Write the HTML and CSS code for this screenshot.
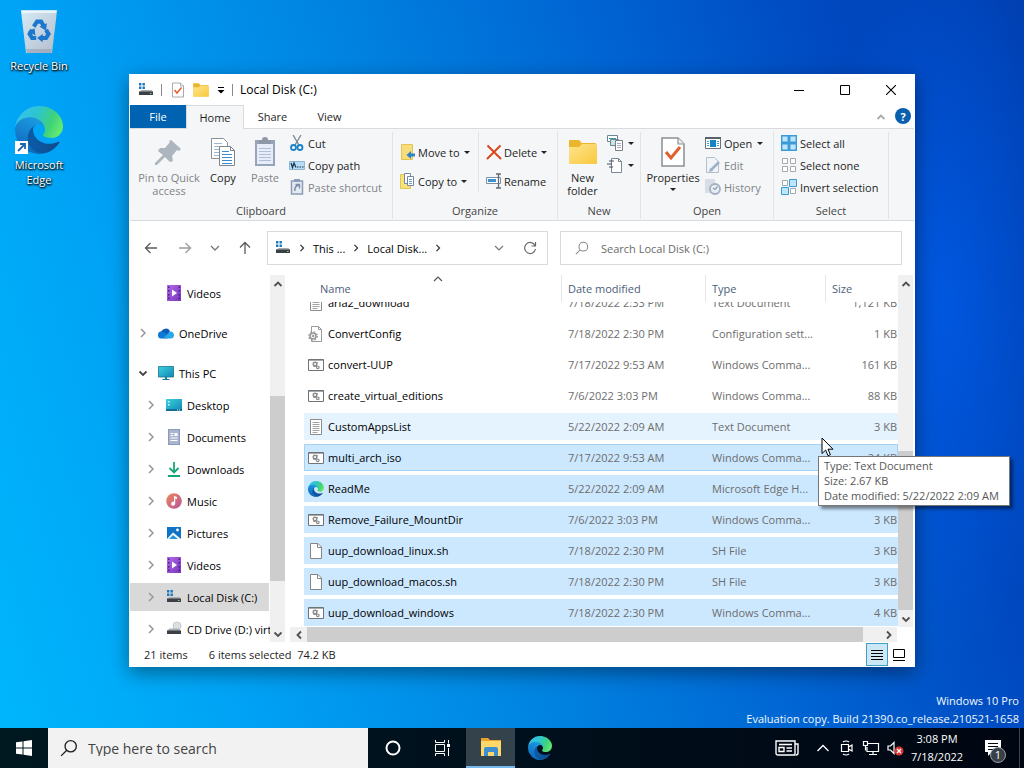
FILE: index.html
```html
<!DOCTYPE html>
<html lang="en">
<head>
  <meta charset="UTF-8" />
  <meta name="viewport" content="width=device-width, initial-scale=1.0"/>
  <title>Local Disk (C:)</title>
  <link rel="stylesheet" href="styles.css">
</head>
<body>

  <!-- shared icons -->
  <svg class="sprite" width="0" height="0" aria-hidden="true">
    <defs>
      <linearGradient id="edgeBottom" x1="0.25" y1="0.6" x2="1" y2="0.6">
        <stop offset="0" stop-color="#0c59a4"/><stop offset="1" stop-color="#114a8b"/>
      </linearGradient>
      <linearGradient id="edgeLeft" x1="0.6" y1="0" x2="0.2" y2="1">
        <stop offset="0" stop-color="#1b9de2"/><stop offset="0.5" stop-color="#1680cf"/><stop offset="1" stop-color="#0663b5"/>
      </linearGradient>
      <linearGradient id="edgeTop" x1="0" y1="0.3" x2="1" y2="0.6">
        <stop offset="0" stop-color="#35c1f1"/><stop offset="0.4" stop-color="#2dc5cf"/><stop offset="0.75" stop-color="#3fd17c"/><stop offset="1" stop-color="#66eb6e"/>
      </linearGradient>
      <linearGradient id="folderFill" x1="0" y1="0" x2="1" y2="1">
        <stop offset="0" stop-color="#ffe48f"/><stop offset="1" stop-color="#f8c93c"/>
      </linearGradient>
      <linearGradient id="binFill" x1="0" y1="0" x2="1" y2="1">
        <stop offset="0" stop-color="#d6ebf6"/><stop offset="1" stop-color="#b2bccc"/>
      </linearGradient>
      <linearGradient id="screenFill" x1="0" y1="0" x2="1" y2="1">
        <stop offset="0" stop-color="#3ad3de"/><stop offset="1" stop-color="#1285b5"/>
      </linearGradient>
      <linearGradient id="musicFill" x1="0" y1="0" x2="1" y2="1">
        <stop offset="0" stop-color="#ee8a55"/><stop offset="1" stop-color="#b7539b"/>
      </linearGradient>
      <linearGradient id="videoFill" x1="0" y1="0" x2="1" y2="1">
        <stop offset="0" stop-color="#b06ae6"/><stop offset="1" stop-color="#7a36bd"/>
      </linearGradient>
    </defs>

    <symbol id="edge" viewBox="0 0 256 256">
      <g transform="translate(-4.63 -4.92)">
        <path fill="url(#edgeBottom)" d="M235.68 195.46a93.73 93.73 0 0 1-10.54 4.71 101.87 101.87 0 0 1-35.9 6.46c-47.32 0-88.54-32.55-88.54-74.32A31.48 31.48 0 0 1 117.13 105c-42.8 1.8-53.8 46.4-53.8 72.53 0 73.88 68.09 81.37 82.76 81.37 7.91 0 19.84-2.3 27-4.56l1.31-.44a128.34 128.34 0 0 0 66.6-52.8 4 4 0 0 0-5.32-5.64Z"/>
        <path fill="url(#edgeLeft)" d="M110.34 246.34A79.2 79.2 0 0 1 87.6 225a80.72 80.72 0 0 1 29.53-120c3.12-1.47 8.45-4.13 15.54-4a32.35 32.35 0 0 1 25.69 13 31.88 31.88 0 0 1 6.36 18.66c0-.21 24.46-79.6-80-79.6-43.9 0-80 41.66-80 78.21a130.15 130.15 0 0 0 12.11 56 128 128 0 0 0 156.38 67.11 75.55 75.55 0 0 1-62.78-8Z"/>
        <path fill="url(#edgeTop)" d="M156.94 153.78c-.81 1.05-3.3 2.5-3.3 5.66 0 2.61 1.7 5.12 4.72 7.23 14.38 10 41.49 8.68 41.56 8.68a59.56 59.56 0 0 0 30.27-8.35 61.38 61.38 0 0 0 30.43-52.88c.26-22.41-8-37.31-11.34-43.91-21.19-41.45-66.92-65.28-116.67-65.28A128 128 0 0 0 4.63 131.18c.48-36.54 36.8-66.05 80-66.05 3.5 0 23.46.34 42 10.07 16.34 8.58 24.9 18.94 30.85 29.21 6.18 10.67 7.28 24.15 7.28 29.52s-2.74 13.33-7.82 19.85Z"/>
      </g>
    </symbol>

    <symbol id="drive" viewBox="0 0 16 16">
      <path fill="#1a79bd" d="M1 1h2.400v2.400H1zM4.500 1h2.400v2.400H4.500zM1 4.500h2.400v2.400H1zM4.500 4.500h2.400v2.400H4.500z"/>
      <path fill="#a9adb2" d="M3.500 8h10L15 10H1z"/>
      <path fill="#3b4046" d="M1 9.500h14V13H1z"/>
      <path fill="#7fd38a" d="M12 11h1.500v1H12z"/>
    </symbol>
    <symbol id="cd-drive" viewBox="0 0 16 16">
      <circle cx="11" cy="5" r="4" fill="#dfe3e5" stroke="#b9bec2" stroke-width="0.800"/>
      <circle cx="11" cy="5" r="1.200" fill="#fff" stroke="#b9bec2" stroke-width="0.600"/>
      <path fill="#a9adb2" d="M3.500 7.500h9.500L15 10H1z"/>
      <path fill="#3b4046" d="M1 9.500h14V13H1z"/>
    </symbol>
    <symbol id="doc-check" viewBox="0 0 26 32">
      <path fill="#fff" stroke="#8a8f94" stroke-width="1.500" d="M2 2h16l6 6v22H2z"/>
      <path fill="#eceff1" stroke="#8a8f94" stroke-width="1.200" d="M18 2v6h6"/>
      <path fill="none" stroke="#e0602c" stroke-width="3" d="M6 16l5 6 9-11"/>
    </symbol>
    <symbol id="folder" viewBox="0 0 32 28">
      <path fill="#eab62d" d="M2 3q0-1 1-1h9l3 3h13q1 0 1 1v19H2z"/>
      <path fill="url(#folderFill)" d="M2 9h10l3-3h14q1 0 1 1v18q0 1-1 1H3q-1 0-1-1z"/>
    </symbol>
    <symbol id="chevron" viewBox="0 0 10 10">
      <path fill="none" stroke="currentColor" stroke-width="1.500" d="M3 1l4 4-4 4"/>
    </symbol>
    <symbol id="up" viewBox="0 0 10 10">
      <path fill="none" stroke="currentColor" stroke-width="1.800" d="M1.500 7L5 3.500 8.500 7"/>
    </symbol>
    <symbol id="down" viewBox="0 0 10 10">
      <path fill="none" stroke="currentColor" stroke-width="1.800" d="M1.500 3.500L5 7l3.500-3.500"/>
    </symbol>
    <symbol id="search" viewBox="0 0 16 16">
      <circle cx="9.500" cy="6.500" r="5" fill="none" stroke="currentColor" stroke-width="1.200"/>
      <path stroke="currentColor" stroke-width="1.200" d="M6 10l-5 5"/>
    </symbol>

    <symbol id="videos" viewBox="0 0 16 16">
      <path fill="url(#videoFill)" d="M1 0h14v16H1z"/>
      <path fill="#4a1c80" d="M2 1.500h1.500V3H2zM2 5h1.500v1.500H2zM2 9h1.500v1.500H2zM2 12.500h1.500V14H2zM12.500 1.500H14V3h-1.500zM12.500 5H14v1.500h-1.500zM12.500 9H14v1.500h-1.500zM12.500 12.500H14V14h-1.500z"/>
      <path fill="#fff" d="M6 4.500l5 3.500-5 3.500z"/>
    </symbol>
    <symbol id="onedrive" viewBox="0 0 16 16">
      <path fill="#0a5cb5" d="M3 7a5 5 0 0 1 9-1l-3 5H2z"/>
      <path fill="#0f78d4" d="M0 10.500A3.500 3.500 0 0 1 5.500 7L12 11l-3 2.500H3.500A3.200 3.200 0 0 1 0 10.500z"/>
      <path fill="#28a8ea" d="M5 13.500l7-7a3.500 3.500 0 0 1 4 3.700 3.300 3.300 0 0 1-3 3.300z"/>
    </symbol>
    <symbol id="pc" viewBox="0 0 16 16">
      <path fill="url(#screenFill)" stroke="#1a7390" stroke-width="0.800" d="M.500 1.500h15v10.500H.500z"/>
      <path fill="#17799d" d="M7 12h2v2H7zM4.500 14h7v1h-7z"/>
    </symbol>
    <symbol id="desktop" viewBox="0 0 16 16">
      <path fill="url(#screenFill)" d="M0 2h16v12H0z"/>
      <path fill="#0e6f97" d="M0 12h16v2H0z"/>
      <path fill="#e6fbff" d="M2 4h1.500v1.500H2zM2 7h1.500v1.500H2zM11 12.500h1v1h-1zM13 12.500h1v1h-1z"/>
    </symbol>
    <symbol id="documents" viewBox="0 0 16 16">
      <path fill="#8b9ab8" d="M2 0h12v16H2z"/>
      <path fill="#a9b5ce" d="M3 1h10v14H3z"/>
      <path stroke="#fff" d="M4.500 4.500h3M4.500 6.500h3M4.500 9h7M4.500 11.500h7"/>
      <path fill="#fff" d="M8.500 4h3v3h-3z"/>
    </symbol>
    <symbol id="downloads" viewBox="0 0 16 16">
      <path fill="none" stroke="#17a678" stroke-width="1.800" d="M8 1v10M3.500 7L8 11.500 12.500 7M2 15h12"/>
    </symbol>
    <symbol id="music" viewBox="0 0 16 16">
      <circle cx="8" cy="8" r="7.800" fill="url(#musicFill)"/>
      <path fill="#fff" d="M8 3l3 1v2L9.200 5.400V10.500A2 2 0 1 1 8 8.800z"/>
    </symbol>
    <symbol id="pictures" viewBox="0 0 16 16">
      <path fill="#1173c7" d="M1 2h14v12H1z"/>
      <path fill="#fff" d="M1 14l6-6.500 8 6.500z"/>
      <path fill="#2a93dc" d="M3 14l4-4 5 4z"/>
      <circle cx="11.500" cy="5" r="1.400" fill="#fff"/>
    </symbol>

    <symbol id="text-file" viewBox="0 0 16 16">
      <path fill="#fff" stroke="#8b8b8b" d="M2.500.500h11v15h-11z"/>
      <path stroke="#a2a2a2" d="M4.500 3.500h7M4.500 5.500h7M4.500 7.500h7M4.500 9.500h7M4.500 11.500h7M4.500 13.500h5"/>
    </symbol>
    <symbol id="blank-file" viewBox="0 0 16 16">
      <path fill="#fff" stroke="#858585" d="M2.500.500h7.500l3.500 3.500v11.500h-11z"/>
      <path fill="none" stroke="#858585" d="M9.500.500v4h4"/>
    </symbol>
    <symbol id="config-file" viewBox="0 0 16 16">
      <path fill="#fff" stroke="#9a9a9a" d="M3.500.500h7l3 3v12h-10z"/>
      <path fill="none" stroke="#9a9a9a" d="M10.500.500v3h3"/>
      <circle cx="5" cy="10" r="3" fill="#eee" stroke="#969696" stroke-width="1.500"/>
      <circle cx="5" cy="10" r="4.300" fill="none" stroke="#969696" stroke-width="1.200" stroke-dasharray="1.700 1.700"/>
      <circle cx="5" cy="10" r="1" fill="#858585"/>
    </symbol>
    <symbol id="cmd-file" viewBox="0 0 16 16">
      <path fill="#fff" stroke="#6f7478" d="M.500 2.500h15v11H.500z"/>
      <path stroke="#6f7478" stroke-width="1.200" d="M.500 3h15"/>
      <circle cx="7" cy="7" r="1.800" fill="none" stroke="#8a8a8a" stroke-width="1.400"/>
      <circle cx="9.800" cy="10.300" r="1.300" fill="none" stroke="#8a8a8a" stroke-width="1.200"/>
      <path stroke="#8a8a8a" d="M9.500 5l-1 2.500M5 9l3 .500"/>
    </symbol>
  </svg>

  <main class="desktop">

    <div class="shortcuts">
      <a class="shortcut" href="#">
        <svg width="48" height="48" viewBox="0 0 48 48">
          <path fill="url(#binFill)" d="M6 4h36l-5 42H11z"/>
          <path fill="#f3f9fc" opacity="0.800" d="M6 3h36l-1 3H7z"/>
          <path fill="#8d98a8" opacity="0.500" d="M11 42h26l-1 4H12z"/>
          <g transform="translate(4 4) scale(0.820)">
            <g fill="none" stroke="#1b78cc" stroke-width="5">
              <path d="M18 19l4-6h5l3 5"/>
              <path d="M33 23l3 5-3 5h-5"/>
              <path d="M21 33h-5l-3-5 3-5"/>
            </g>
            <path fill="#1b78cc" d="M25 19l9-4-1 9zM29 28v10l-7-5zM11 25l8-4 1 9z"/>
          </g>
        </svg>
        <span>Recycle Bin</span>
      </a>
      <a class="shortcut" href="#">
        <svg width="48" height="48" viewBox="0 0 48 48">
          <use href="#edge" width="48" height="48"/>
          <path fill="#fff" d="M0 35h13v13H0z"/>
          <path fill="none" stroke="#1b67b5" stroke-width="1.800" d="M3 45l7-7M5 38h5v5"/>
        </svg>
        <span>Microsoft Edge</span>
      </a>
    </div>

    <section class="window">
      <header class="titlebar">
        <svg width="16" height="16"><use href="#drive"/></svg>
        <i class="sep"></i>
        <button class="quick" aria-label="Properties"><svg width="14" height="16"><use href="#doc-check"/></svg></button>
        <button class="quick" aria-label="New folder"><svg width="18" height="16"><use href="#folder"/></svg></button>
        <button class="quick" aria-label="Customize toolbar"><svg width="8" height="8" viewBox="0 0 8 8"><path d="M1 1h6v1H1zM.500 4h7L4 7.500z"/></svg></button>
        <i class="sep"></i>
        <h1>Local Disk (C:)</h1>
        <div class="caption-buttons">
          <button aria-label="Minimize"><svg width="10" height="10" viewBox="0 0 10 10"><path fill="none" stroke="#000" d="M0 5.500h10"/></svg></button>
          <button aria-label="Maximize"><svg width="10" height="10" viewBox="0 0 10 10"><path fill="none" stroke="#000" d="M.500.500h9v9h-9z"/></svg></button>
          <button aria-label="Close"><svg width="10" height="10" viewBox="0 0 10 10"><path fill="none" stroke="#000" stroke-width="1.100" d="M0 0l10 10M10 0L0 10"/></svg></button>
        </div>
      </header>

      <nav class="tabs">
        <button class="tab file">File</button>
        <button class="tab active">Home</button>
        <button class="tab">Share</button>
        <button class="tab">View</button>
        <button class="collapse" aria-label="Collapse ribbon"><svg width="10" height="10"><use href="#up"/></svg></button>
        <button class="help" aria-label="Help">?</button>
      </nav>

      <div class="ribbon">
        <section class="group clipboard">
          <div class="group-body">
            <button class="big wide disabled">
              <svg width="32" height="32" viewBox="0 0 32 32"><path fill="#adb5bf" d="M18 4l10 9-2 2-2-1-5 6 1 5-3 1-5-5-8 8-2 0 0-2 8-8-5-4 2-3 5 0 5-6-1-1z"/></svg>
              <span>Pin to Quick access</span>
            </button>
            <button class="big">
              <svg width="32" height="32" viewBox="0 0 32 32">
                <path fill="#fff" stroke="#8b9198" d="M4.500 2.500h12l4 4v16h-16z"/>
                <path stroke="#9fb9d4" d="M7 7.500h8M7 10.500h8M7 13.500h6M7 16.500h6M7 19.500h6"/>
                <path fill="#fff" stroke="#7f858c" d="M12.500 10.500h11l4 4v15h-15z"/>
                <path fill="none" stroke="#7f858c" d="M23.500 10.500v4h4"/>
                <path stroke="#3b8bd0" d="M15 15.500h7M15 18.500h10M15 21.500h10M15 24.500h10M15 27.500h10"/>
              </svg>
              <span>Copy</span>
            </button>
            <button class="big paste disabled">
              <svg width="32" height="32" viewBox="0 0 32 32">
                <path fill="#98a4ba" d="M6 4h20v26H6z"/>
                <path fill="#e6edf8" d="M8 8h16v20H8z"/>
                <path fill="#8d97a8" d="M10 4h3q0-3 3-3t3 3h3v4H10z"/>
                <path stroke="#b1bfd6" d="M10 12.500h12M10 15.500h12M10 18.500h12M10 21.500h12M10 24.500h12"/>
              </svg>
              <span>Paste</span>
            </button>
            <div class="stack">
              <button class="small">
                <svg width="16" height="16" viewBox="0 0 16 16">
                  <path fill="none" stroke="#7b8894" stroke-width="1.300" d="M4 0l6 10M12 0L6 10"/>
                  <circle cx="4.500" cy="12.500" r="2.500" fill="none" stroke="#1b84c6" stroke-width="1.800"/>
                  <circle cx="11" cy="12.500" r="2.500" fill="none" stroke="#1b84c6" stroke-width="1.800"/>
                </svg>Cut
              </button>
              <button class="small">
                <svg width="16" height="16" viewBox="0 0 16 16">
                  <path fill="#b8dcf5" stroke="#8eb5d2" d="M.500 4.500h15v8H.500z"/>
                  <path fill="none" stroke="#17344f" stroke-width="1.200" d="M2 6l1.500 4.500L5 6l2 4.500M8 10h1.500M10.500 10H12M13 10h1.500"/>
                </svg>Copy path
              </button>
              <button class="small disabled">
                <svg width="16" height="16" viewBox="0 0 16 16">
                  <path fill="#e4eaf3" stroke="#8e9cb5" stroke-width="1.500" d="M2.500 2h11v13h-11z"/>
                  <path fill="#8e9cb5" d="M5 0h6v3H5z"/>
                  <path fill="none" stroke="#7d8ca8" stroke-width="1.400" d="M6 12q-1-5 4-6M6.500 5.500h4v4"/>
                </svg>Paste shortcut
              </button>
            </div>
          </div>
          <h2>Clipboard</h2>
        </section>

        <section class="group organize">
          <div class="group-body">
            <div class="stack two">
              <button class="small">
                <svg width="16" height="16" viewBox="0 0 16 16"><path fill="#f7dc7c" stroke="#e8c351" d="M1.500.500h11v15h-11z"/><path fill="#3184c4" d="M15 9.500v3h-4V15L6.500 11 11 7v2.500z"/></svg>
                Move to <i class="caret"></i>
              </button>
              <button class="small">
                <svg width="16" height="16" viewBox="0 0 16 16"><path fill="#f7e27c" stroke="#dcc94f" d="M.500 1.500h10v14H.500z"/><path fill="#fff" stroke="#7386a8" d="M4.500.500h6v10h-6z"/><path fill="#fff" stroke="#7386a8" d="M7.500 3.500h6v9h-6z"/><path stroke="#6fa2d8" d="M9 6.500h3M9 8.500h3M9 10.500h3"/></svg>
                Copy to <i class="caret"></i>
              </button>
            </div>
            <div class="stack two ruled">
              <button class="small">
                <svg width="16" height="16" viewBox="0 0 16 16"><path fill="none" stroke="#d8471f" stroke-width="2" d="M1.500 1.500L15 15M14.500 1.500L1 15"/></svg>
                Delete <i class="caret"></i>
              </button>
              <button class="small">
                <svg width="16" height="16" viewBox="0 0 16 16"><path fill="#fff" stroke="#7b8ea3" d="M.500 4.500h14v6H.500z"/><path fill="#3c91d0" d="M2 6h8v3H2z"/><path fill="none" stroke="#5f6a75" stroke-width="1.300" d="M10 1h5M12.500 1v14M10 15h5"/></svg>
                Rename
              </button>
            </div>
          </div>
          <h2>Organize</h2>
        </section>

        <section class="group new">
          <div class="group-body">
            <button class="big">
              <svg width="32" height="32" viewBox="0 0 32 32"><use href="#folder" y="2" width="32" height="28"/></svg>
              <span>New folder</span>
            </button>
            <div class="stack tight">
              <button class="small" aria-label="New item">
                <svg width="16" height="16" viewBox="0 0 16 16"><path fill="#fff" stroke="#6d8390" d="M.500.500h10v6H.500z"/><path fill="#c8e6e0" stroke="#6d8390" d="M3.500 4.500h8v6h-8z"/><path fill="#fff" stroke="#7a7f88" d="M8.500 5.500h7v10h-7z"/><path stroke="#a6abb8" d="M10 8.500h4M10 10.500h4M10 12.500h4"/><path stroke="#3b9bb0" d="M2 3.500h7"/></svg>
                <i class="caret"></i>
              </button>
              <button class="small" aria-label="Easy access">
                <svg width="16" height="16" viewBox="0 0 16 16"><path fill="#fff" stroke="#7a8794" d="M4.500 1.500h7l3 3v11h-10z"/><path fill="none" stroke="#7a8794" d="M11.500 1.500v3h3"/><path stroke="#42515e" stroke-width="1.200" d="M2 4h5M0 7h5M2 10h4"/></svg>
                <i class="caret"></i>
              </button>
            </div>
          </div>
          <h2>New</h2>
        </section>

        <section class="group open">
          <div class="group-body">
            <button class="big">
              <svg width="26" height="32"><use href="#doc-check"/></svg>
              <span>Properties</span>
              <i class="caret"></i>
            </button>
            <div class="stack">
              <button class="small">
                <svg width="16" height="16" viewBox="0 0 16 16"><path fill="#fff" stroke="#6a7178" d="M.500 2.500h15v11H.500z"/><path fill="#5a6168" d="M0 2h16v2H0z"/><path fill="#1882c5" d="M5 5h6v7H5z"/><path stroke="#3aa0d8" d="M2 6.500h2M2 8.500h2M2 10.500h2M12 6.500h2M12 8.500h2M12 10.500h2"/></svg>
                Open <i class="caret"></i>
              </button>
              <button class="small disabled">
                <svg width="16" height="16" viewBox="0 0 16 16"><path fill="#f1f4f7" stroke="#b5bfc9" d="M1.500.500h8l4 4v11h-12z"/><path stroke="#9db2c6" stroke-width="2.500" d="M14 5l-8 8"/><path fill="#9db2c6" d="M4 15l1-4 3 3z"/></svg>
                Edit
              </button>
              <button class="small disabled">
                <svg width="16" height="16" viewBox="0 0 16 16"><path fill="#d7dee7" d="M0 0h10v14H0z"/><circle cx="10" cy="10" r="5" fill="#e8edf3" stroke="#a2b0c1" stroke-width="1.800"/><path fill="none" stroke="#8b9cb0" stroke-width="1.200" d="M12.500 7.500L10 10.500 8 9"/></svg>
                History
              </button>
            </div>
          </div>
          <h2>Open</h2>
        </section>

        <section class="group select">
          <div class="group-body">
            <div class="stack">
              <button class="small">
                <svg width="16" height="16" viewBox="0 0 16 16"><path fill="#bfe5fa" stroke="#3b9bd6" stroke-width="1.400" d="M.700.700h6.600v6.600H.700zM8.700.700h6.600v6.600H8.700zM.700 8.700h6.600v6.600H.700zM8.700 8.700h6.600v6.600H8.700z"/></svg>
                Select all
              </button>
              <button class="small">
                <svg width="16" height="16" viewBox="0 0 16 16"><path fill="#fff" stroke="#a5a9ad" d="M1.500 1.500h5v5h-5zM9.500 1.500h5v5h-5zM1.500 9.500h5v5h-5zM9.500 9.500h5v5h-5z"/></svg>
                Select none
              </button>
              <button class="small">
                <svg width="16" height="16" viewBox="0 0 16 16"><path fill="#fff" stroke="#a5a9ad" d="M1.500 1.500h5v5h-5zM9.500 9.500h5v5h-5z"/><path fill="#bfe5fa" stroke="#3b9bd6" d="M8.500.500h7v7h-7zM.500 8.500h7v7h-7z"/></svg>
                Invert selection
              </button>
            </div>
          </div>
          <h2>Select</h2>
        </section>
      </div>

      <div class="navbar">
        <div class="history">
          <button aria-label="Back"><svg width="14" height="14" viewBox="0 0 14 14"><path fill="none" stroke="#5c5c5c" stroke-width="1.300" d="M13 7H1.500M6.500 2l-5 5 5 5"/></svg></button>
          <button aria-label="Forward"><svg width="14" height="14" viewBox="0 0 14 14"><path fill="none" stroke="#9a9a9a" stroke-width="1.300" d="M1 7h11.500M7.500 2l5 5-5 5"/></svg></button>
          <button class="narrow" aria-label="Recent locations"><svg width="10" height="10" viewBox="0 0 10 10"><path fill="none" stroke="#777" stroke-width="1.300" d="M1 3l4 4 4-4"/></svg></button>
          <button aria-label="Up"><svg width="14" height="14" viewBox="0 0 14 14"><path fill="none" stroke="#5c5c5c" stroke-width="1.300" d="M7 13V1.500M2 6.500l5-5 5 5"/></svg></button>
        </div>
        <div class="address">
          <svg width="16" height="16"><use href="#drive"/></svg>
          <svg class="crumb-sep" width="8" height="8"><use href="#chevron"/></svg>
          <a href="#">This ...</a>
          <svg class="crumb-sep" width="8" height="8"><use href="#chevron"/></svg>
          <a href="#">Local Disk...</a>
          <svg class="crumb-sep" width="8" height="8"><use href="#chevron"/></svg>
          <button class="drop" aria-label="Previous locations"><svg width="10" height="10" viewBox="0 0 10 10"><path fill="none" stroke="#777" stroke-width="1.200" d="M1 3l4 4 4-4"/></svg></button>
          <button aria-label="Refresh"><svg width="14" height="14" viewBox="0 0 14 14"><path fill="none" stroke="#666" stroke-width="1.200" d="M12 4.500A5.500 5.500 0 1 0 12.500 8M12.500 1v4h-4"/></svg></button>
        </div>
        <label class="search">
          <svg width="14" height="14"><use href="#search"/></svg>
          <input type="text" aria-label="Search" placeholder="Search Local Disk (C:)">
        </label>
      </div>

      <div class="content">
        <aside class="sidebar">
          <ul>
            <li class="child leaf"><a href="#"><svg width="16" height="16"><use href="#videos"/></svg>Videos</a></li>
            <li class="root"><a href="#"><svg class="twist" width="10" height="10"><use href="#chevron"/></svg><svg width="16" height="16"><use href="#onedrive"/></svg>OneDrive</a></li>
            <li class="root"><a href="#"><svg class="twist opened" width="10" height="10"><use href="#down"/></svg><svg width="16" height="16"><use href="#pc"/></svg>This PC</a></li>
            <li class="child"><a href="#"><svg class="twist" width="10" height="10"><use href="#chevron"/></svg><svg width="16" height="16"><use href="#desktop"/></svg>Desktop</a></li>
            <li class="child"><a href="#"><svg class="twist" width="10" height="10"><use href="#chevron"/></svg><svg width="16" height="16"><use href="#documents"/></svg>Documents</a></li>
            <li class="child"><a href="#"><svg class="twist" width="10" height="10"><use href="#chevron"/></svg><svg width="16" height="16"><use href="#downloads"/></svg>Downloads</a></li>
            <li class="child"><a href="#"><svg class="twist" width="10" height="10"><use href="#chevron"/></svg><svg width="16" height="16"><use href="#music"/></svg>Music</a></li>
            <li class="child"><a href="#"><svg class="twist" width="10" height="10"><use href="#chevron"/></svg><svg width="16" height="16"><use href="#pictures"/></svg>Pictures</a></li>
            <li class="child"><a href="#"><svg class="twist" width="10" height="10"><use href="#chevron"/></svg><svg width="16" height="16"><use href="#videos"/></svg>Videos</a></li>
            <li class="child current"><a href="#"><svg class="twist" width="10" height="10"><use href="#chevron"/></svg><svg width="16" height="16"><use href="#drive"/></svg>Local Disk (C:)</a></li>
            <li class="child"><a href="#"><svg class="twist" width="10" height="10"><use href="#chevron"/></svg><svg width="16" height="16"><use href="#cd-drive"/></svg>CD Drive (D:) virtio</a></li>
          </ul>
          <div class="scrollbar tree-scroll">
            <button aria-label="Scroll up"><svg width="10" height="10"><use href="#up"/></svg></button>
            <i class="before"></i><i class="thumb"></i><i class="after"></i>
            <button aria-label="Scroll down"><svg width="10" height="10"><use href="#down"/></svg></button>
          </div>
        </aside>

        <div class="files">
          <div class="files-main">
            <table>
              <thead>
                <tr>
                  <th>Name<svg class="sort" width="10" height="10" viewBox="0 0 10 10"><path fill="none" stroke="#555" stroke-width="1.200" d="M1 6l4-4 4 4"/></svg></th>
                  <th>Date modified</th><th>Type</th><th>Size</th>
                </tr>
              </thead>
              <tbody>
                <tr><td><svg width="16" height="16"><use href="#text-file"/></svg>aria2_download</td><td>7/18/2022 2:33 PM</td><td>Text Document</td><td>1,121 KB</td></tr>
                <tr><td><svg width="16" height="16"><use href="#config-file"/></svg>ConvertConfig</td><td>7/18/2022 2:30 PM</td><td>Configuration sett...</td><td>1 KB</td></tr>
                <tr><td><svg width="16" height="16"><use href="#cmd-file"/></svg>convert-UUP</td><td>7/17/2022 9:53 AM</td><td>Windows Comma...</td><td>161 KB</td></tr>
                <tr><td><svg width="16" height="16"><use href="#cmd-file"/></svg>create_virtual_editions</td><td>7/6/2022 3:03 PM</td><td>Windows Comma...</td><td>88 KB</td></tr>
                <tr class="hover"><td><svg width="16" height="16"><use href="#text-file"/></svg>CustomAppsList</td><td>5/22/2022 2:09 AM</td><td>Text Document</td><td>3 KB</td></tr>
                <tr class="selected focused"><td><svg width="16" height="16"><use href="#cmd-file"/></svg>multi_arch_iso</td><td>7/17/2022 9:53 AM</td><td>Windows Comma...</td><td>24 KB</td></tr>
                <tr class="selected"><td><svg width="16" height="16"><use href="#edge"/></svg>ReadMe</td><td>5/22/2022 2:09 AM</td><td>Microsoft Edge H...</td><td>3 KB</td></tr>
                <tr class="selected"><td><svg width="16" height="16"><use href="#cmd-file"/></svg>Remove_Failure_MountDir</td><td>7/6/2022 3:03 PM</td><td>Windows Comma...</td><td>3 KB</td></tr>
                <tr class="selected"><td><svg width="16" height="16"><use href="#blank-file"/></svg>uup_download_linux.sh</td><td>7/18/2022 2:30 PM</td><td>SH File</td><td>3 KB</td></tr>
                <tr class="selected"><td><svg width="16" height="16"><use href="#blank-file"/></svg>uup_download_macos.sh</td><td>7/18/2022 2:30 PM</td><td>SH File</td><td>3 KB</td></tr>
                <tr class="selected"><td><svg width="16" height="16"><use href="#cmd-file"/></svg>uup_download_windows</td><td>7/18/2022 2:30 PM</td><td>Windows Comma...</td><td>4 KB</td></tr>
              </tbody>
            </table>
            <div class="scrollbar file-scroll">
              <button aria-label="Scroll up"><svg width="10" height="10"><use href="#up"/></svg></button>
              <i class="before"></i><i class="thumb"></i>
              <button aria-label="Scroll down"><svg width="10" height="10"><use href="#down"/></svg></button>
            </div>
          </div>
          <div class="scrollbar horizontal">
            <button aria-label="Scroll left"><svg width="10" height="10" viewBox="0 0 10 10"><path fill="none" stroke="currentColor" stroke-width="1.800" d="M7 1.500L3.500 5 7 8.500"/></svg></button>
            <i class="thumb"></i><i class="after"></i>
            <button aria-label="Scroll right"><svg width="10" height="10" viewBox="0 0 10 10"><path fill="none" stroke="currentColor" stroke-width="1.800" d="M3 1.500L6.500 5 3 8.500"/></svg></button>
          </div>
        </div>
      </div>

      <footer class="statusbar">
        <span class="count">21 items</span>
        <span>6 items selected&nbsp; 74.2 KB</span>
        <div class="views">
          <button class="on" aria-label="Details"><svg width="12" height="12" viewBox="0 0 12 12"><path stroke="#000" d="M0 1.500h12M0 4.500h12M0 7.500h12M0 10.500h12"/></svg></button>
          <button aria-label="Large icons"><svg width="12" height="12" viewBox="0 0 12 12"><path fill="none" stroke="#000" d="M.500.500h11v8H.500zM0 11.500h12"/></svg></button>
        </div>
      </footer>
    </section>

    <div class="tooltip">Type: Text Document<br>Size: 2.67 KB<br>Date modified: 5/22/2022 2:09 AM</div>
    <svg class="cursor" width="14" height="20" viewBox="0 0 14 20"><path fill="#fff" stroke="#000" d="M1 1v15.500l3.600-3.400 2.400 5.600 2.400-1-2.400-5.500h5z"/></svg>

    <p class="watermark">Windows 10 Pro<br>Evaluation copy. Build 21390.co_release.210521-1658</p>
  </main>

  <footer class="taskbar">
    <button class="app" aria-label="Start"><svg width="16" height="16" viewBox="0 0 16 16"><path fill="#fff" d="M0 2.300l6.500-.900v6.100H0zM7.500 1.200L16 0v7.500H7.500zM0 8.500h6.500v6.100L0 13.700zM7.500 8.500H16V16l-8.500-1.200z"/></svg></button>
    <label class="task-search">
      <svg width="18" height="18"><use href="#search"/></svg>
      <input type="text" aria-label="Type here to search" placeholder="Type here to search">
    </label>
    <button class="app" aria-label="Cortana"><svg width="16" height="16" viewBox="0 0 16 16"><circle cx="8" cy="8" r="6.500" fill="none" stroke="#fff" stroke-width="2"/></svg></button>
    <button class="app" aria-label="Task view"><svg width="16" height="16" viewBox="0 0 16 16"><path fill="none" stroke="#fff" d="M1.500 4.500h9v7h-9zM1.500 0v2.500h9V0M1.500 16v-2.500h9V16M14.500 0v3.500M14.500 8v8"/><path fill="#fff" d="M13 4h3v3h-3z"/></svg></button>
    <button class="app running" aria-label="File Explorer"><svg width="22" height="20" viewBox="0 0 22 20"><path fill="#e8a32e" d="M1 1h7l2 2h11v5H1z"/><path fill="#ffd869" d="M1 4h20v15H1z"/><path fill="#3d8fd0" d="M4 19v-7q0-2 2-2h10q2 0 2 2v7h-4v-4H8v4z"/></svg></button>
    <button class="app" aria-label="Microsoft Edge"><svg width="24" height="24"><use href="#edge"/></svg></button>

    <div class="tray">
      <button class="news" aria-label="News"><svg width="24" height="16" viewBox="0 0 24 16"><path fill="none" stroke="#fff" stroke-width="1.400" d="M1 1h19v14H3q-2 0-2-2zM20 4h3v9q0 2-2 2M4 4.500h13M4 7.500h5v4H4zM11.500 8H17M11.500 11H17"/></svg></button>
      <button aria-label="Show hidden icons"><svg width="12" height="12" viewBox="0 0 12 12"><path fill="none" stroke="#fff" stroke-width="1.300" d="M.500 9L6 3.500 11.500 9"/></svg></button>
      <button aria-label="Meet now"><svg width="14" height="16" viewBox="0 0 14 16"><path fill="none" stroke="#fff" stroke-width="1.200" d="M1.500 4.500h7v7h-7zM8.500 7L12 5v6L8.500 9M3 2q3-2 6 0M3 14q3 2 6 0"/></svg></button>
      <button aria-label="Network"><svg width="18" height="16" viewBox="0 0 18 16"><path fill="none" stroke="#fff" stroke-width="1.200" d="M6 3.500h10.500v8H5V7M11 11.500v3M7 14.500h8M1.500 1.500h4v4h-4zM3.500 5.500v5"/></svg></button>
      <button aria-label="Volume muted"><svg width="18" height="16" viewBox="0 0 18 16"><path fill="none" stroke="#fff" stroke-width="1.200" d="M2 6h2.500L8 2.500v11L4.500 10H2z"/><circle cx="13" cy="11" r="4.500" fill="#d93434"/><path stroke="#fff" stroke-width="1.300" d="M11 9l4 4M15 9l-4 4"/></svg></button>
      <button class="clock">3:08 PM<br>7/18/2022</button>
      <button class="actions" aria-label="Notifications">
        <svg width="18" height="18" viewBox="0 0 18 18"><path fill="#fff" d="M1 1h16v12H8l-4 4v-4H1z"/><path stroke="#000a14" d="M4 4.500h10M4 7.500h10M4 10.500h7"/></svg>
        <span class="badge">1</span>
      </button>
    </div>
  </footer>

</body>
</html>
```
FILE: styles.css
```css
:root {
  --ribbon: #f5f6f7;
  --line: #d9dadb;
  --text: #1e1e1e;
  --muted: #6d6d6d;
  --select: #cce8ff;
  --hover: #e5f3ff;
  --thumb: #cdcdcd;
}

* { box-sizing: border-box; }

body {
  margin: 0;
  height: 100vh;
  display: flex;
  flex-direction: column;
  overflow: hidden;
  font-family: "Open Sans", "Noto Sans", sans-serif;
  font-size: 11px;
  line-height: 15px;
  color: var(--text);
}

button {
  display: flex;
  align-items: center;
  justify-content: center;
  padding: 0;
  border: none;
  background: none;
  font: inherit;
  color: inherit;
}

a {
  color: inherit;
  text-decoration: none;
}

h1, h2, p, ul {
  margin: 0;
  padding: 0;
  font-size: inherit;
  font-weight: normal;
}

svg { flex: none; }

.sprite { position: absolute; }

.caret {
  border: 3px solid transparent;
  border-top-color: #222;
  border-bottom: none;
}

/* desktop */
.desktop {
  flex: 1;
  min-height: 0;
  position: relative;
  background:
    radial-gradient(ellipse 12% 50% at 92% 42%, rgba(0, 98, 245, 0.6), transparent),
    linear-gradient(73deg, #00b6fb 0%, #00a2f5 20%, #0082e0 45%, #0064d2 65%, #0048bf 84%, #0040b2 100%);
}

.shortcuts {
  display: flex;
  flex-direction: column;
  gap: 33px;
  width: 78px;
  padding-top: 7px;
}

.shortcut {
  display: flex;
  flex-direction: column;
  align-items: center;
  gap: 3px;
  padding: 0 8px;
  text-align: center;
  color: #fff;
  text-shadow: 0 1px 2px #000, 1px 1px 2px #000;
}

.shortcut span {
  margin: 0 -8px;
}

.shortcut:last-child span {
  margin: 0;
}

.window {
  position: absolute;
  inset: 74px 109px 61px 129px;
  display: flex;
  flex-direction: column;
  padding: 0 1px;
  background: #fff;
  box-shadow: 0 6px 18px rgba(0, 0, 0, 0.4);
}

/* title bar */
.titlebar {
  display: flex;
  align-items: center;
  height: 31px;
  padding-left: 8px;
  gap: 7px;
  color: #000;
}

.titlebar h1 { font-size: 12px; }

.sep {
  width: 1px;
  height: 12px;
  background: #8a8a8a;
}

.titlebar .sep + .quick { margin-left: 2px; }

.caption-buttons {
  display: flex;
  margin-left: auto;
}

.caption-buttons button {
  width: 46px;
  height: 31px;
}

/* tabs */
.tabs {
  display: flex;
  height: 24px;
  border-bottom: 1px solid var(--line);
}

.tab {
  width: 57px;
  height: 23px;
}

.tab.file {
  width: 56px;
  background: #0063b1;
  color: #fff;
}

.tab.active {
  width: 58px;
  height: 24px;
  background: var(--ribbon);
  border: 1px solid var(--line);
  border-bottom: none;
}

.collapse {
  width: 22px;
  margin-left: auto;
  color: #aaa;
}

.help {
  width: 16px;
  height: 16px;
  margin: 3px 3px 0 3px;
  border-radius: 50%;
  background: #0a5fae;
  color: #fff;
  font-weight: bold;
}

/* ribbon */
.ribbon {
  display: flex;
  height: 92px;
  padding-top: 3px;
  padding-bottom: 1px;
  background: var(--ribbon);
  border-bottom: 1px solid var(--line);
}

.group {
  display: flex;
  flex-direction: column;
  justify-content: space-between;
  border-right: 1px solid #e2e3e4;
}

.group h2 {
  text-align: center;
  line-height: 16px;
  color: #444;
}

.group-body {
  display: flex;
  padding-left: 7px;
}

.clipboard { width: 263px; }
.organize { width: 165px; }
.new { width: 83px; }
.open { width: 133px; }
.select { width: 115px; }

.new .group-body { padding-left: 0; }
.open .group-body { padding-left: 4px; }

.big {
  flex-direction: column;
  justify-content: flex-start;
  width: 44px;
  padding-top: 4px;
  line-height: 13px;
}

.big span { margin-top: 3px; }
.big .caret { margin-top: 4px; }
.big.wide { width: 64px; }
.big.paste { width: 40px; }
.new .big { width: 49px; }
.open .big { width: 56px; }

.disabled { color: #808489; }

.stack {
  display: flex;
  flex-direction: column;
  align-items: flex-start;
  padding-left: 4px;
}

.small {
  height: 22px;
  gap: 3px;
  white-space: nowrap;
}

.small .caret { margin-left: 2px; }

.select .stack { padding-left: 0; }
.new .stack { padding-left: 0; }

.stack.two {
  width: 78px;
  padding-left: 0;
  padding-top: 9px;
  gap: 7px;
}

.two .small { gap: 2px; }

.stack.ruled {
  padding-left: 7px;
  border-left: 1px solid #e2e3e4;
}

/* address row */
.navbar {
  display: flex;
  align-items: center;
  height: 54px;
  padding: 0 12px 0 4px;
}

.history {
  display: flex;
  margin-right: 5px;
}

.history button {
  width: 34px;
  height: 34px;
}

.history .narrow { width: 26px; }

.address, .search {
  display: flex;
  align-items: center;
  height: 34px;
  border: 1px solid var(--line);
}

.address {
  flex: 262;
  margin-right: 12px;
  padding: 0 10px 0 7px;
  gap: 7px;
  color: #000;
}

.crumb-sep { color: #333; }

.address .drop { margin-left: auto; }
.address .drop + button { margin-left: 12px; }

.search {
  flex: 326;
  padding-left: 14px;
  gap: 12px;
  color: #888;
}

input {
  flex: 1;
  min-width: 0;
  padding: 0;
  border: none;
  outline: none;
  background: none;
  font: inherit;
}

input::placeholder {
  color: #6a6a6a;
  opacity: 1;
}

/* main content */
.content {
  flex: 1;
  min-height: 0;
  display: flex;
}

.sidebar {
  display: flex;
  width: 155px;
  margin-right: 5px;
}

.sidebar ul {
  flex: 1;
  min-width: 0;
  padding-top: 2px;
  overflow: hidden;
  list-style: none;
  color: #000;
}

.sidebar li { padding: 2px 1px 2px 0; }

.sidebar a {
  display: flex;
  align-items: center;
  height: 28px;
  padding-left: 16px;
  gap: 5px;
  white-space: nowrap;
}

.sidebar .twist {
  margin-right: 5px;
  color: #999;
}

.sidebar .opened { color: #444; }
.sidebar .leaf a { padding-left: 36px; }
.sidebar .root { padding-top: 10px; }
.sidebar .root a { padding-left: 8px; }
.sidebar .current a { background: #d9d9d9; }

.scrollbar {
  display: flex;
  flex-direction: column;
  width: 15px;
  background: #f0f0f0;
  color: #505050;
}

.scrollbar button {
  flex: none;
  height: 17px;
}

.thumb { background: var(--thumb); }

.tree-scroll .before { flex: 104; }
.tree-scroll .thumb { flex: 185; }
.tree-scroll .after { flex: 44; }

.file-scroll .before { flex: 158; }
.file-scroll .thumb { flex: 159; }

.horizontal {
  flex-direction: row;
  width: auto;
  height: 15px;
  margin-right: 17px;
}

.horizontal button {
  width: 17px;
  height: 15px;
}

.horizontal .thumb { flex: 556; }
.horizontal .after { flex: 17; }

.files {
  flex: 1;
  min-width: 0;
  display: flex;
  flex-direction: column;
}

.files-main {
  flex: 1;
  min-height: 0;
  display: flex;
  padding: 0 1px 0 14px;
}

table {
  flex: 1;
  min-width: 0;
  display: flex;
  flex-direction: column;
}

tr {
  display: grid;
  grid-template-columns: 1fr 144px 120px 73px;
}

th {
  position: relative;
  height: 27px;
  padding: 6px 0 0 6px;
  text-align: left;
  font-weight: normal;
  color: #4c607a;
  border-left: 1px solid #e5e5e5;
}

th:first-child {
  padding-left: 15px;
  border-left-color: transparent;
}

.sort {
  position: absolute;
  top: 0;
  left: 50%;
}

tbody {
  flex: 1;
  min-height: 0;
  display: flex;
  flex-direction: column;
  justify-content: flex-end;
  gap: 4px;
  padding-bottom: 1px;
  overflow: hidden;
}

tbody tr {
  flex: none;
  height: 27px;
  align-items: center;
}

td {
  padding: 0 0 0 7px;
  white-space: nowrap;
  color: var(--muted);
}

td:first-child {
  display: flex;
  align-items: center;
  gap: 4px;
  padding-left: 4px;
  color: #000;
}

td:last-child {
  padding: 0 1px 0 0;
  text-align: right;
}

.hover { background: var(--hover); }
.selected { background: var(--select); }
.focused { box-shadow: inset 0 0 0 1px #a6d3f5; }

.statusbar {
  display: flex;
  align-items: center;
  height: 25px;
  padding: 0 4px 0 14px;
  gap: 21px;
}

.views {
  display: flex;
  margin-left: auto;
}

.views button {
  width: 22px;
  height: 23px;
}

.views .on {
  background: #cce8f7;
  border: 1px solid #3ea0c8;
}

/* overlays */
.tooltip {
  position: absolute;
  top: 456px;
  right: 14px;
  min-width: 192px;
  padding: 1px 6px 2px 5px;
  background: #fff;
  border: 1px solid #767676;
  box-shadow: 3px 3px 3px rgba(0, 0, 0, 0.45);
  color: #575757;
  white-space: nowrap;
}

.cursor {
  position: absolute;
  top: 437px;
  right: 189px;
}

.watermark {
  position: absolute;
  right: 5px;
  bottom: 0;
  text-align: right;
  line-height: 18px;
  color: #f2f8ff;
}

/* taskbar */
.taskbar {
  display: flex;
  height: 40px;
  background: linear-gradient(90deg, #001820, #00101c 50%, #000612);
  color: #fff;
}

.app { width: 49px; }
.app:first-child { width: 48px; }

.task-search {
  display: flex;
  align-items: center;
  flex: 0 1 320px;
  padding-left: 12px;
  gap: 10px;
  background: #f2f2f2;
  color: #222;
}

.task-search input { font-size: 14px; }
.task-search input::placeholder { color: #444; }

.running {
  background: #33424b;
  border-bottom: 2px solid #76b9ed;
}

.tray {
  display: flex;
  margin-left: auto;
  margin-right: 4px;
  border-right: 1px solid #3b434c;
}

.tray button { width: 24px; }
.tray .news { width: 48px; }
.tray .clock { width: 60px; line-height: 18px; }

.tray .actions {
  position: relative;
  width: 52px;
}

.badge {
  position: absolute;
  right: 13px;
  bottom: 5px;
  width: 16px;
  height: 16px;
  border: 1px solid #9a9fa5;
  border-radius: 50%;
  background: #3a4048;
  line-height: 14px;
}
```
